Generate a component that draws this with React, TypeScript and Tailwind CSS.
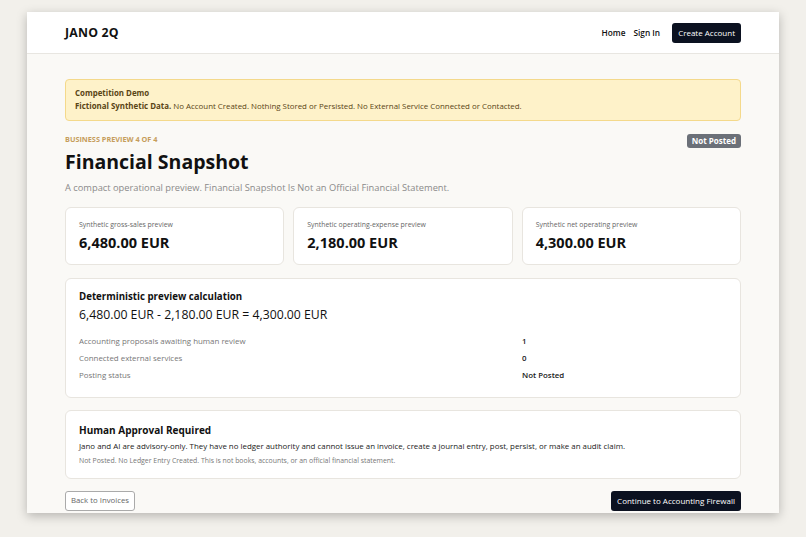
import React from 'react';

const font = { fontFamily: '"Open Sans", "Noto Sans", Arial, sans-serif' };

function StatCard({ label, value }: { label: string; value: string }) {
  return (
    <div className="flex-1 rounded-md border border-[#e8e5df] bg-white px-[13px] pt-[12px] pb-[11px]">
      <div className="text-[6.9px] leading-[10px] text-[#666]">{label}</div>
      <div className="mt-[3px] text-[14.5px] leading-[20px] font-bold text-[#111]">{value}</div>
    </div>
  );
}

export default function App() {
  const rows = [
    ['Accounting proposals awaiting human review', '1'],
    ['Connected external services', '0'],
    ['Posting status', 'Not Posted'],
  ];

  return (
    <div className="h-[537px] overflow-hidden bg-[#f2f0eb] pt-[12px]" style={font}>
      <div className="mx-auto flex h-[501px] w-[752px] flex-col overflow-hidden bg-[#faf9f6] shadow-[0_3px_10px_rgba(0,0,0,0.25)]">
        <header className="flex h-[42px] shrink-0 items-center justify-between border-b border-[#e8e6e1] bg-white px-[38px]">
          <div className="pt-[2px] text-[12.3px] font-bold tracking-[0.2px] text-[#111]">JANO 2Q</div>
          <nav className="flex items-center text-[8.3px] font-semibold text-[#111]">
            <span className="pt-[1px]">Home</span>
            <span className="ml-[8px] pt-[1px]">Sign In</span>
            <button className="ml-[12px] h-[20px] rounded-[3px] bg-[#0b1120] px-[6px] text-[8px] font-normal text-white">
              Create Account
            </button>
          </nav>
        </header>

        <main className="flex flex-col px-[38px] pt-[25px]">
          <div className="rounded-[4px] border border-[#f4d98b] bg-[#fef2c9] px-[9px] pt-[7px] pb-[7px] text-[7.9px] leading-[13px] text-[#5a4515]">
            <div className="font-bold">Competition Demo</div>
            <div>
              <span className="font-bold">Fictional Synthetic Data.</span> No Account Created. Nothing Stored or Persisted. No External Service Connected or Contacted.
            </div>
          </div>

          <div className="mt-[13px] flex items-start justify-between">
            <div>
              <div className="text-[7.3px] leading-[10px] font-bold text-[#c69d5b]">BUSINESS PREVIEW 4 OF 4</div>
              <h1 className="mt-[4px] text-[19.5px] leading-[28px] font-bold text-[#111]">Financial Snapshot</h1>
              <p className="mt-[5px] text-[9.3px] leading-[14px] text-[#8a8a8a]">
                A compact operational preview. Financial Snapshot Is Not an Official Financial Statement.
              </p>
            </div>
            <span className="rounded-[3px] bg-[#6b7078] px-[5px] py-[1px] text-[8px] leading-[12px] font-bold text-white">
              Not Posted
            </span>
          </div>

          <div className="mt-[12px] flex gap-[9px]">
            <StatCard label="Synthetic gross-sales preview" value="6,480.00 EUR" />
            <StatCard label="Synthetic operating-expense preview" value="2,180.00 EUR" />
            <StatCard label="Synthetic net operating preview" value="4,300.00 EUR" />
          </div>

          <section className="mt-[13px] rounded-md border border-[#e8e5df] bg-white px-[13px] pt-[11px] pb-[16px]">
            <div className="text-[9.7px] leading-[14px] font-bold text-[#111]">Deterministic preview calculation</div>
            <div className="mt-[2px] text-[12.25px] leading-[18px] text-[#111]">6,480.00 EUR - 2,180.00 EUR = 4,300.00 EUR</div>
            <div className="mt-[12px] grid grid-cols-[443px_1fr] gap-y-[6px] text-[7.9px] leading-[11px]">
              {rows.map(([k, v]) => (
                <React.Fragment key={k}>
                  <div className="text-[#777]">{k}</div>
                  <div className="font-semibold text-[#1a1a1a]">{v}</div>
                </React.Fragment>
              ))}
            </div>
          </section>

          <section className="mt-[12px] rounded-md border border-[#e8e5df] bg-white px-[13px] pt-[11px] pb-[12px]">
            <div className="text-[10px] leading-[16px] font-bold text-[#111]">Human Approval Required</div>
            <div className="mt-[2px] text-[7.9px] leading-[13px] text-[#222]">
              Jano and AI are advisory-only. They have no ledger authority and cannot issue an invoice, create a journal entry, post, persist, or make an audit claim.
            </div>
            <div className="mt-[3px] text-[6.9px] leading-[10px] text-[#777]">
              Not Posted. No Ledger Entry Created. This is not books, accounts, or an official financial statement.
            </div>
          </section>

          <div className="mt-[12px] flex items-center justify-between">
            <button className="h-[20px] rounded-[3px] border border-[#aaa] bg-white px-[5px] text-[7.8px] text-[#666]">
              Back to Invoices
            </button>
            <button className="h-[20px] rounded-[3px] bg-[#0b1120] px-[6px] text-[8px] text-white">
              Continue to Accounting Firewall
            </button>
          </div>
        </main>
      </div>
    </div>
  );
}
